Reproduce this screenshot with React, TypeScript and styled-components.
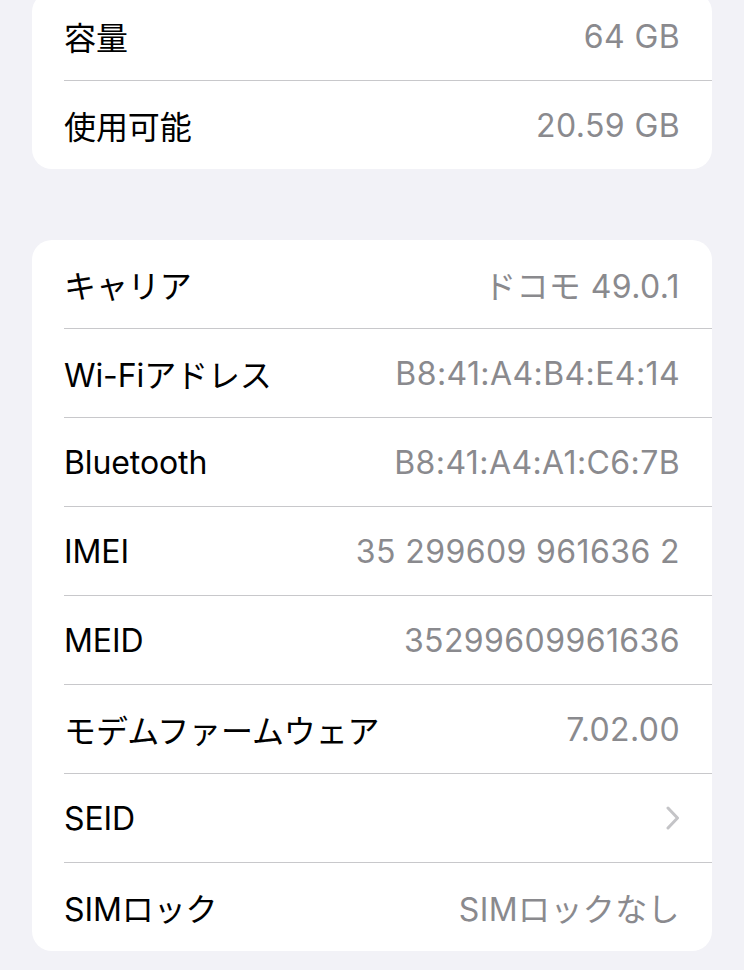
import React from 'react'
import styled, { createGlobalStyle } from 'styled-components'

const GlobalStyle = createGlobalStyle`
  html, body {
    margin: 0;
    padding: 0;
    background: #f2f2f7;
  }
  body {
    font-family: Inter, "Noto Sans CJK JP", sans-serif;
    -webkit-font-smoothing: antialiased;
  }
`

const Page = styled.div`
  width: 744px;
  min-height: 970px;
  padding: 0 32px;
  box-sizing: border-box;
  display: flex;
  flex-direction: column;
  gap: 71px;
  overflow: hidden;
`

const Group = styled.div<{ $cut?: boolean }>`
  background: #ffffff;
  border-radius: 20px;
  margin-top: ${p => (p.$cut ? '-8px' : '0')};
  display: flex;
  flex-direction: column;
  overflow: hidden;
`

const Row = styled.div`
  height: 88px;
  margin-left: 32px;
  padding-right: 32px;
  display: flex;
  align-items: center;
  justify-content: space-between;
  font-size: 32px;
  & + & {
    border-top: 1px solid #c8c8cb;
  }
`

const Label = styled.span`
  color: #000000;
  letter-spacing: -0.1px;
`

const Value = styled.span`
  color: #8a8a8e;
  letter-spacing: 0.4px;
`

const Chevron = () => (
  <svg width="14" height="24" viewBox="0 0 14 24" fill="none">
    <path d="M2 2 L11.5 12 L2 22" stroke="#c4c4c7" strokeWidth="3" strokeLinecap="round" strokeLinejoin="round" />
  </svg>
)

const storage = [
  { label: '容量', value: '64 GB' },
  { label: '使用可能', value: '20.59 GB' },
]

const network = [
  { label: 'キャリア', value: 'ドコモ 49.0.1' },
  { label: 'Wi-Fiアドレス', value: 'B8:41:A4:B4:E4:14' },
  { label: 'Bluetooth', value: 'B8:41:A4:A1:C6:7B' },
  { label: 'IMEI', value: '35 299609 961636 2' },
  { label: 'MEID', value: '35299609961636' },
  { label: 'モデムファームウェア', value: '7.02.00' },
  { label: 'SEID', value: null },
  { label: 'SIMロック', value: 'SIMロックなし' },
]

export default function App() {
  return (
    <>
      <GlobalStyle />
      <Page>
        <Group $cut>
          {storage.map(r => (
            <Row key={r.label}>
              <Label>{r.label}</Label>
              <Value>{r.value}</Value>
            </Row>
          ))}
        </Group>
        <Group>
          {network.map(r => (
            <Row key={r.label}>
              <Label>{r.label}</Label>
              {r.value ? <Value>{r.value}</Value> : <Chevron />}
            </Row>
          ))}
        </Group>
      </Page>
    </>
  )
}
